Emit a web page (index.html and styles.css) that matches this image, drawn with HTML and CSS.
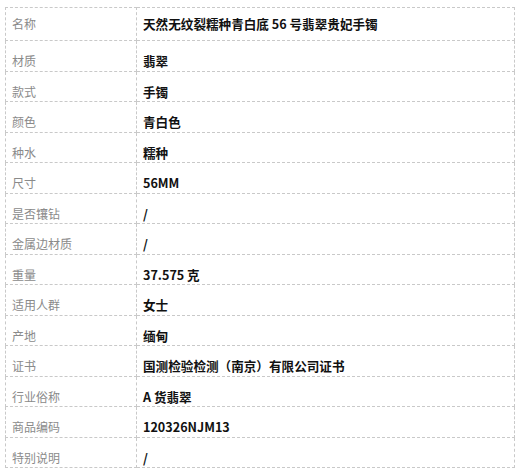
FILE: index.html
```html
<!DOCTYPE html>
<html lang="zh">
<head>
<meta charset="utf-8">
<link rel="stylesheet" href="styles.css">
</head>
<body>
<div class="wrap">
<table class="spec">
<tbody>
<tr class="first"><td class="k">名称</td><td class="v">天然无纹裂糯种青白底 56 号翡翠贵妃手镯</td></tr>
<tr><td class="k">材质</td><td class="v">翡翠</td></tr>
<tr><td class="k">款式</td><td class="v">手镯</td></tr>
<tr><td class="k">颜色</td><td class="v">青白色</td></tr>
<tr><td class="k">种水</td><td class="v">糯种</td></tr>
<tr><td class="k">尺寸</td><td class="v">56MM</td></tr>
<tr><td class="k">是否镶钻</td><td class="v">/</td></tr>
<tr><td class="k">金属边材质</td><td class="v">/</td></tr>
<tr><td class="k">重量</td><td class="v">37.575 克</td></tr>
<tr><td class="k">适用人群</td><td class="v">女士</td></tr>
<tr><td class="k">产地</td><td class="v">缅甸</td></tr>
<tr><td class="k">证书</td><td class="v">国测检验检测（南京）有限公司证书</td></tr>
<tr><td class="k">行业俗称</td><td class="v">A 货翡翠</td></tr>
<tr><td class="k">商品编码</td><td class="v">120326NJM13</td></tr>
<tr><td class="k">特别说明</td><td class="v">/</td></tr>
</tbody>
</table>
</div>
</body>
</html>
```
FILE: styles.css
```css
html, body {
  margin: 0;
  padding: 0;
  background: #fff;
}
.wrap {
  padding: 7px 5px 0 5px;
}
.spec {
  width: 510px;
  border-collapse: collapse;
  font-family: "Noto Sans CJK SC", "Noto Sans", sans-serif;
  font-size: 12px;
  line-height: 16px;
}
.spec td {
  border: 1px dashed #c9c9c9;
  box-sizing: border-box;
  padding: 12px 6px 0 6px;
  vertical-align: top;
}
.spec tr td {
  height: 31px;
}
.spec tr:nth-child(odd) td {
  height: 30px;
}
.spec tr.first td {
  height: 33px;
  padding: 8px 6px 0 6px;
}
.spec td.k {
  width: 131px;
  color: #8a8a8a;
}
.spec td.v {
  color: #111;
  font-weight: bold;
  font-size: 12.6px;
}
```
